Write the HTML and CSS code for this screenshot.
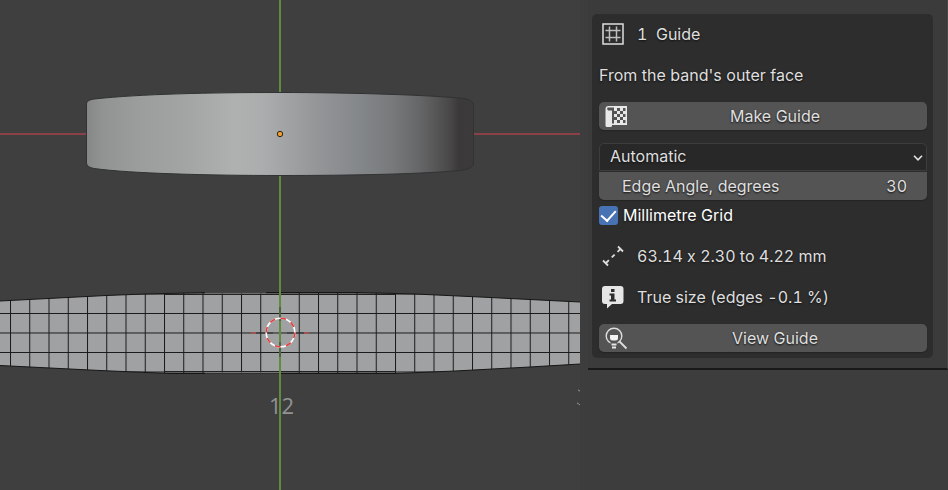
FILE: index.html
```
<!DOCTYPE html>
<html lang="en">
<head>
<meta charset="utf-8">
<title>Ring guide</title>
<link rel="stylesheet" href="styles.css">
</head>
<body>
<main class="workspace">
  <section class="viewport" aria-label="3D viewport">
    <svg class="scene" viewBox="0 0 580 490" preserveAspectRatio="xMidYMin slice">
      <defs>
        <linearGradient id="metal" gradientUnits="userSpaceOnUse" x1="86" y1="0" x2="474" y2="0">
          <stop offset="0" stop-color="#858686"/>
          <stop offset=".04" stop-color="#919292"/>
          <stop offset=".13" stop-color="#9b9c9c"/>
          <stop offset=".26" stop-color="#a3a5a4"/>
          <stop offset=".38" stop-color="#afb1b1"/>
          <stop offset=".45" stop-color="#acaeae"/>
          <stop offset=".52" stop-color="#a0a2a4"/>
          <stop offset=".6" stop-color="#939597"/>
          <stop offset=".7" stop-color="#85888a"/>
          <stop offset=".79" stop-color="#77797b"/>
          <stop offset=".86" stop-color="#656667"/>
          <stop offset=".91" stop-color="#545353"/>
          <stop offset=".94" stop-color="#484646"/>
          <stop offset=".96" stop-color="#3c393a"/>
          <stop offset="1" stop-color="#3d3a3b"/>
        </linearGradient>
        <pattern id="millimetres" patternUnits="userSpaceOnUse" x="279.5" y="313" width="19.25" height="19.5">
          <path d="M.5 0V19.5M0 .5H19.25" stroke="#191919" stroke-width="1"/>
        </pattern>
      </defs>
      <path d="M280 0V490" stroke="#618b3d" stroke-width="2"/>
      <path d="M0 134H580" stroke="#a5434d" stroke-width="1.5"/>
      <path d="M86.500 104Q86.500 100 94 99C140 94 210 92.500 280 92.500S430 95 464 98.500Q473.500 100 473.500 105V163Q473.500 168 464 170C430 174 350 175.500 280 175.500S130 173.500 94 168.500Q86.500 167 86.500 163Z" fill="url(#metal)" stroke="#303233" stroke-width="1"/>
      <circle cx="280" cy="134" r="2.700" fill="#f29d2e" stroke="#2e2518"/>
      <path d="M0 301L48 298.500L106 295.500L145 294L205 292.500H357L415 294L480 297L580 302V364L530 367L455 371L395 373.500H170L100 370.500L0 365.500Z" fill="#a0a1a2"/>
      <path d="M0 301L48 298.500L106 295.500L145 294L205 292.500H357L415 294L480 297L580 302V364L530 367L455 371L395 373.500H170L100 370.500L0 365.500Z" fill="url(#millimetres)"/>
      <path d="M0 301L48 298.500L106 295.500L145 294L205 292.500H357L415 294L480 297L580 302M580 364L530 367L455 371L395 373.500H170L100 370.500L0 365.500" fill="none" stroke="#161616"/>
      <path d="M164 294.500H396M164 371.500H396" stroke="#222"/>
      <path d="M205 293H266M205 372.800H280" stroke="#888" stroke-width=".8"/>
      <path d="M280 292V490" stroke="#618b3d" stroke-width="2"/>
      <path d="M280 307V321M280 342V357" stroke="#4c6640" stroke-width="2"/>
      <path d="M256 333H273M287 333H304" stroke="#333"/>
      <path d="M251 333H256M304 333H309" stroke="#d84a43"/>
      <circle cx="280.500" cy="332.500" r="14.300" fill="none" stroke="#fff" stroke-width="1.600"/>
      <circle cx="280.500" cy="332.500" r="14.300" fill="none" stroke="#e43b3b" stroke-width="1.600" pathLength="16" stroke-dasharray="1 1"/>
      <text class="size-mark" x="269" y="414">12</text>
      <path d="M280 395V417" stroke="#618b3d" stroke-width="2"/>
      <path d="M578 390L580 391M577 403Q579 404 580 405" stroke="#999"/>
    </svg>
  </section>

  <aside class="sidebar">
    <div class="region">
      <form class="panel">
        <div class="row">
          <svg class="icon" viewBox="0 0 22 22" fill="none"><path d="M1 1H21V21H1Z" stroke="#dedede" stroke-width="1.500"/><path d="M7.500 3.500V18.500M14.500 3.500V18.500M3.500 7.500H18.500M3.500 14.500H18.500" stroke="#bdbdbd" stroke-width="1.500"/></svg>
          <span class="text">1&nbsp; Guide</span>
        </div>
        <p class="row">From the band's outer face</p>
        <button class="button" type="button">
          <svg class="icon" viewBox="0 0 22 22"><path d="M3.500 1H22V20H7V20.500Q7 22 5.500 22H2Q.5 22 .5 20.500V4Q.5 1 3.500 1Z" fill="#e8e8e8"/><path d="M2.500 2.500H9V18.500H7V5.500H3Q1.500 4 2.500 2.500Z" fill="#545454"/><path d="M12 3H15V6H12ZM18 3H20.500V6H18ZM9 6H12V9H9ZM15 6H18V9H15ZM12 9H15V12H12ZM18 9H20.500V12H18ZM9 12H12V15H9ZM15 12H18V15H15ZM12 15H15V18H12ZM18 15H20.500V18H18Z" fill="#545454"/></svg>
          <span class="caption">Make Guide</span>
        </button>
        <div class="stack">
          <div class="dropdown">
            <select class="select" aria-label="Unwrap method"><option>Automatic</option></select>
            <svg class="chevron" viewBox="0 0 10 6"><path d="M1 .8L5 4.800L9 .8" fill="none" stroke="#e3e3e3" stroke-width="1.600"/></svg>
          </div>
          <div class="number">
            <label for="angle">Edge Angle, degrees</label>
            <input id="angle" class="value" type="text" inputmode="numeric" value="30">
          </div>
          <div class="row check">
            <input id="grid" class="tick" type="checkbox" checked>
            <label for="grid">Millimetre Grid</label>
          </div>
        </div>
        <div class="row">
          <svg class="icon" viewBox="0 0 22 22" fill="none" stroke="#dedede" stroke-width="1.800"><path d="M1 15.500L6 20.500M16 1.500L21 6.500"/><path d="M4 18L18.500 4" stroke-dasharray="4 4"/></svg>
          <span class="text">63.14 x 2.30 to 4.22 mm</span>
        </div>
        <div class="row">
          <svg class="icon" viewBox="0 0 22 22"><path d="M3 0H18.500Q21.500 0 21.500 3V15Q21.500 18 18.500 18H10L5 22.500V18H3Q0 18 0 15V3Q0 0 3 0Z" fill="#e6e6e6"/><path d="M9 3H12.500V6H9ZM7.500 7.500H12.500V13.500H14V15.500H7.500V13.500H9V9.500H7.500Z" fill="#2d2d2d"/></svg>
          <span class="text">True size (edges -0.1 %)</span>
        </div>
        <button class="button" type="button">
          <svg class="icon" viewBox="0 0 22 22"><g fill="none" stroke="#dedede"><circle cx="9" cy="9" r="7.800" stroke-width="1.400"/><path d="M14.500 14.500L21.500 21.500" stroke-width="1.800"/></g><path d="M5 8H13V11Q13 13.500 10.500 13.500H7.500Q5 13.500 5 11Z" fill="#f2f2f2"/><path d="M5.500 15H12.500V22H5.500Z" fill="#545454"/><path d="M6.500 16.500H11.500V18.500H6.500ZM7 19.500H11V21.500H7Z" fill="#e6e6e6"/></svg>
          <span class="caption">View Guide</span>
        </button>
      </form>
    </div>
  </aside>
</main>
</body>
</html>
```
FILE: styles.css
```
* {
  box-sizing: border-box;
}

body {
  margin: 0;
  background: #3d3d3d;
  color: #dfdfdf;
  font: 16px/28px Inter, sans-serif;
  font-optical-sizing: none;
}

.workspace {
  display: flex;
  min-height: 100vh;
}

.viewport {
  flex: 1;
  min-width: 0;
  background: #3f3f3f;
}

.scene {
  display: block;
  width: 100%;
  height: 100vh;
}

.size-mark {
  fill: #929292;
  font: 22px "Open Sans", sans-serif;
}

.sidebar {
  width: 368px;
  padding-left: 8px;
}

.region {
  padding: 14px 14px 10px 4px;
  background: #3b3b3b;
  border-right: 1px solid #484848;
  border-bottom: 2px solid #191919;
}

.panel {
  display: flex;
  flex-direction: column;
  gap: 13px;
  padding: 6px 6px 6px 7px;
  border-radius: 5px;
  background: #2d2d2d;
  text-shadow: 0 1px 2px #111;
}

.row {
  display: flex;
  align-items: center;
  height: 28px;
  margin: 0;
}

.icon {
  flex: none;
  width: 22px;
  height: 22px;
  overflow: visible;
}

.row .icon {
  margin: 0 13px 0 3px;
}

.text {
  font-feature-settings: "tnum", "calt" 0;
}

.button {
  display: flex;
  align-items: center;
  height: 28px;
  padding: 0 4px 0 6px;
  border: 0;
  border-radius: 5px;
  background: #545454;
  color: inherit;
  font: inherit;
  font-optical-sizing: none;
  text-shadow: inherit;
  box-shadow: 0 1px 1px #242424;
}

.caption {
  flex: 1;
  text-align: center;
}

.stack {
  display: grid;
  grid-template-columns: minmax(0, 1fr);
  gap: 1px;
}

.dropdown {
  position: relative;
}

.select {
  display: block;
  width: 100%;
  height: 28px;
  padding: 0 10px 2px;
  appearance: none;
  border: 1px solid #3d3d3d;
  border-radius: 5px 5px 0 0;
  background: #282828;
  color: inherit;
  font: inherit;
  font-optical-sizing: none;
  line-height: 24px;
  text-shadow: inherit;
}

.chevron {
  position: absolute;
  top: 12px;
  right: 4px;
  width: 10px;
  height: 6px;
  pointer-events: none;
}

.number {
  display: flex;
  height: 28px;
  padding: 0 20px 0 23px;
  border-radius: 0 0 5px 5px;
  background: #545454;
  box-shadow: 0 1px 1px #242424;
}

.value {
  flex: 1;
  min-width: 0;
  padding: 0;
  border: 0;
  background: none;
  color: inherit;
  font: inherit;
  font-feature-settings: "tnum";
  font-optical-sizing: none;
  text-align: right;
  text-shadow: inherit;
}

.check {
  gap: 5px;
  color: #fff;
}

.tick {
  display: grid;
  place-items: center;
  width: 19px;
  height: 19px;
  margin: 0;
  padding-bottom: 3px;
  appearance: none;
  border-radius: 3px;
  background: #4772b3;
}

.tick:checked::before {
  content: "";
  width: 7px;
  height: 12px;
  border: solid #fff;
  border-width: 0 2px 2px 0;
  transform: rotate(42deg);
}
```
